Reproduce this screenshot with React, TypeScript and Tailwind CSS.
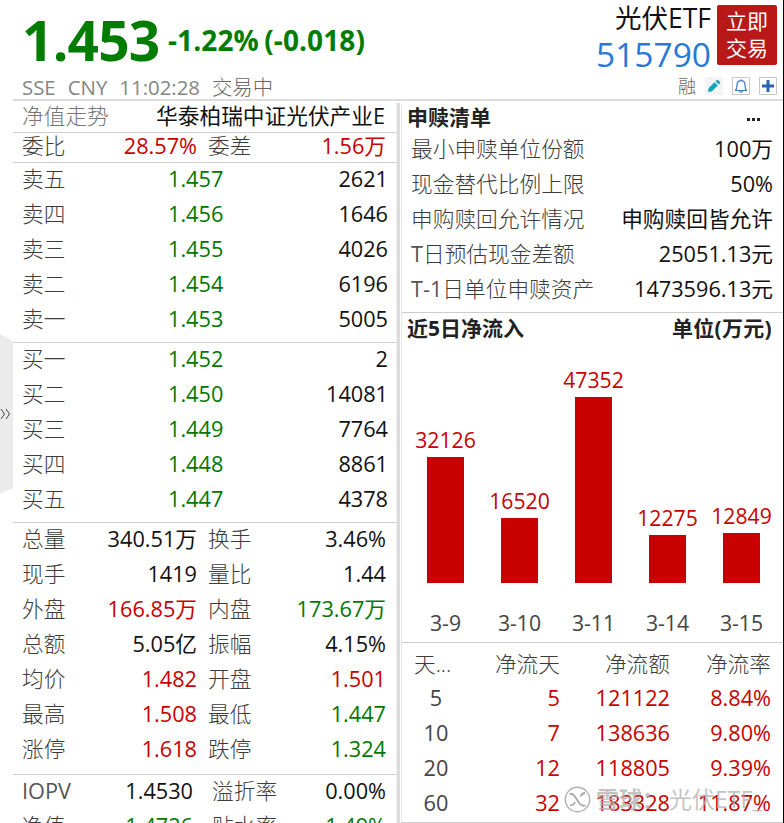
import React from 'react';
import clsx from 'clsx';

type Tone = 'up' | 'down' | 'flat';

const toneClass: Record<Tone, string> = {
  up: 'text-[#c80000]',
  down: 'text-[#007800]',
  flat: 'text-[#111111]',
};

const asks = [
  ['卖五', '1.457', '2621'],
  ['卖四', '1.456', '1646'],
  ['卖三', '1.455', '4026'],
  ['卖二', '1.454', '6196'],
  ['卖一', '1.453', '5005'],
];

const bids = [
  ['买一', '1.452', '2'],
  ['买二', '1.450', '14081'],
  ['买三', '1.449', '7764'],
  ['买四', '1.448', '8861'],
  ['买五', '1.447', '4378'],
];

const stats: [string, string, Tone, string, string, Tone][] = [
  ['总量', '340.51万', 'flat', '换手', '3.46%', 'flat'],
  ['现手', '1419', 'flat', '量比', '1.44', 'flat'],
  ['外盘', '166.85万', 'up', '内盘', '173.67万', 'down'],
  ['总额', '5.05亿', 'flat', '振幅', '4.15%', 'flat'],
  ['均价', '1.482', 'up', '开盘', '1.501', 'up'],
  ['最高', '1.508', 'up', '最低', '1.447', 'down'],
  ['涨停', '1.618', 'up', '跌停', '1.324', 'down'],
];

const navStats: [string, string, Tone, string, string, Tone][] = [
  ['IOPV', '1.4530', 'flat', '溢折率', '0.00%', 'flat'],
  ['净值', '1.4726', 'down', '贴水率', '1.49%', 'down'],
];

const redemption = [
  ['最小申赎单位份额', '100万'],
  ['现金替代比例上限', '50%'],
  ['申购赎回允许情况', '申购赎回皆允许'],
  ['T日预估现金差额', '25051.13元'],
  ['T-1日单位申赎资产', '1473596.13元'],
];

const inflow = [
  { date: '3-9', value: 32126, height: 126 },
  { date: '3-10', value: 16520, height: 65 },
  { date: '3-11', value: 47352, height: 186 },
  { date: '3-14', value: 12275, height: 48 },
  { date: '3-15', value: 12849, height: 50 },
];

const flows = [
  ['5', '5', '121122', '8.84%'],
  ['10', '7', '138636', '9.80%'],
  ['20', '12', '118805', '9.39%'],
  ['60', '32', '183328', '11.87%'],
];

// Chinese labels are light, a leading latin part keeps the normal weight
const Label = ({ text, className }: { text: string; className?: string }) => {
  const latin = text.match(/^[A-Z0-9-]+/)?.[0] ?? '';
  return (
    <span className={clsx('font-light text-[#3c3c3c]', className)}>
      {latin && <span className="font-normal text-[#555]">{latin}</span>}
      {text.slice(latin.length)}
    </span>
  );
};

const Header = () => (
  <header className="flex h-[101px] shrink-0 justify-between border-b-2 border-[#dcdcdc] pl-[9px]">
    <div>
      <div className="flex h-[76px] items-center font-bold text-[#007c00]">
        <span className="mt-[3px] w-[146px] text-[55px] leading-none tracking-[-0.8px]">1.453</span>
        <span className="mt-[3px] text-[28px] leading-none tracking-[0.1px] [word-spacing:-2px]">
          -1.22% (-0.018)
        </span>
      </div>
      <div className="flex h-[22px] items-center gap-[12px] text-[20.4px] text-[#858585]">
        <span>SSE</span>
        <span>CNY</span>
        <span>11:02:28</span>
        <span className="font-light text-[#666]">交易中</span>
      </div>
    </div>
    <div className="w-[190px] pr-[6px]">
      <div className="flex h-[70px] justify-end gap-[6px] pt-[5px]">
        <div className="text-right">
          <div className="h-[29px] text-[26.500px] leading-[26px] text-[#111]">光伏ETF</div>
          <div className="text-[33.500px] leading-[40px] text-[#2878d8]">515790</div>
        </div>
        <button className="h-[60px] w-[60px] shrink-0 rounded-[2px] bg-[#b81818] text-[21px] leading-[27px] text-white">
          立即
          <br />
          交易
        </button>
      </div>
      <div className="flex h-[32px] items-center justify-end gap-[9px]">
        <span className="text-[18px] font-light text-[#666]">融</span>
        <svg className="h-[18px] w-[18px] bg-[#f3f3f3]" viewBox="0 0 18 18">
          <path d="M3 15l.8-4L9.500 5.300l3.200 3.200L7 14.200z" fill="#0aa5bd" />
          <path d="M10.500 4.300l1-1q1-.8 1.800 0l1.400 1.400q.8.900 0 1.800l-1 1z" fill="#0aa5bd" />
        </svg>
        <svg className="h-[18px] w-[18px] bg-white" viewBox="0 0 18 18" fill="none">
          <path d="M.5.5h17v17H.5z" stroke="#c8c8c8" />
          <path
            d="M3 13.500h12M3.500 13.300q1.500-1.300 1.500-5.300c0-2.700 1.700-4.300 4-4.300s4 1.600 4 4.300q0 4 1.500 5.300M9 2.200v1.500M7.300 14q1.700 2.500 3.400 0"
            stroke="#3d78c4"
            strokeWidth="1.200"
          />
        </svg>
        <svg className="h-[18px] w-[18px] bg-white" viewBox="0 0 18 18" fill="none">
          <path d="M.5.5h17v17H.5z" stroke="#c8c8c8" />
          <path d="M9 3v12M3 9h12" stroke="#2a62b0" strokeWidth="3" />
        </svg>
      </div>
    </div>
  </header>
);

const OrderRow = ({ row }: { row: string[] }) => (
  <div className="flex h-[35px] items-center pr-[8px] pb-[3px] pl-[9px]">
    <Label text={row[0]} className="w-[146px]" />
    <span className="text-[#007800]">{row[1]}</span>
    <span className="ml-auto text-[#111]">{row[2]}</span>
  </div>
);

const StatRow = ({ row, nav }: { row: (typeof stats)[number]; nav?: boolean }) => (
  <div className="flex h-[35px] items-center pr-[10px] pb-[3px] pl-[9px]">
    <Label text={row[0]} className="w-[60px]" />
    <span className={clsx('text-right', nav ? 'w-[111px]' : 'w-[115px]', toneClass[row[2]])}>{row[1]}</span>
    <Label text={row[3]} className={nav ? 'ml-[19px]' : 'ml-[11px]'} />
    <span className={clsx('ml-auto', toneClass[row[5]])}>{row[4]}</span>
  </div>
);

const QuotePanel = () => (
  <section className="w-[383px] shrink-0 pt-[1px]">
    <div className="flex h-[31px] items-center justify-between border-b border-[#ccc] pr-[11px] pb-[2px] pl-[9px]">
      <span className="font-light text-[#777]">净值走势</span>
      <span className="text-[#111]">华泰柏瑞中证光伏产业E</span>
    </div>
    <div className="flex h-[30px] items-center border-b border-[#ccc]">
      <div className="w-full">
        <StatRow row={['委比', '28.57%', 'up', '委差', '1.56万', 'up']} />
      </div>
    </div>
    <div className="border-b border-[#ccc] pb-[4px]">
      {asks.map((row) => (
        <OrderRow key={row[0]} row={row} />
      ))}
    </div>
    <div className="border-b border-[#ccc] pb-[4px]">
      {bids.map((row) => (
        <OrderRow key={row[0]} row={row} />
      ))}
    </div>
    <div className="border-b border-[#ccc] pb-[6px]">
      {stats.map((row) => (
        <StatRow key={row[0]} row={row} />
      ))}
    </div>
    {navStats.map((row) => (
      <StatRow key={row[0]} row={row} nav />
    ))}
  </section>
);

const InflowChart = () => (
  <div className="h-[297px] border-b border-[#ccc] pl-[6px]">
    <div className="flex h-[237px] items-end">
      {inflow.map((bar) => (
        <div key={bar.date} className="flex w-[74px] flex-col items-center">
          <span className="mb-[2px] pl-[1px] text-[21.200px] leading-[30px] text-[#c80000]">{bar.value}</span>
          <div className="w-[37px] bg-[#c80000]" style={{ height: bar.height }} />
        </div>
      ))}
    </div>
    <div className="flex pt-[25px] text-[21.200px] text-[#444]">
      {inflow.map((bar) => (
        <span key={bar.date} className="w-[74px] pl-[1px] text-center leading-[30px]">
          {bar.date}
        </span>
      ))}
    </div>
  </div>
);

const FundPanel = () => (
  <section className="w-[381px] shrink-0 pt-[1px]">
    <div className="flex h-[31px] items-center justify-between pr-[23px] pl-[5px] text-[21px] font-bold text-[#222]">
      <span>申赎清单</span>
      <span className="flex gap-[2px] pt-[3px]">
        <i className="size-[3px] bg-[#222]" />
        <i className="size-[3px] bg-[#222]" />
        <i className="size-[3px] bg-[#222]" />
      </span>
    </div>
    <div className="border-b border-[#ccc] pb-[4px]">
      {redemption.map(([label, value]) => (
        <div key={label} className="flex h-[35px] items-center justify-between pr-[10px] pb-[3px] pl-[9px]">
          <Label text={label} />
          <span className="text-[#111]">{value}</span>
        </div>
      ))}
    </div>
    <div className="flex h-[33px] items-center justify-between pr-[11px] pb-[2px] pl-[5px] text-[21px] font-bold text-[#222]">
      <span>近5日净流入</span>
      <span className="tracking-[0.3px]">单位(万元)</span>
    </div>
    <InflowChart />
    <div className="border-b border-[#ccc] pt-[4px]">
      <div className="flex h-[35px] items-center pb-[2px] font-light text-[#3c3c3c]">
        <span className="w-[67px] pl-[12px]">天...</span>
        <span className="w-[91px] text-right">净流天</span>
        <span className="w-[110px] text-right">净流额</span>
        <span className="w-[101px] text-right">净流率</span>
      </div>
      {flows.map((row) => (
        <div key={row[0]} className="flex h-[35px] items-center pb-[3px] text-[#c80000]">
          <span className="w-[67px] pl-[1px] text-center text-[#444]">{row[0]}</span>
          <span className="w-[91px] text-right">{row[1]}</span>
          <span className="w-[110px] text-right">{row[2]}</span>
          <span className="w-[101px] text-right">{row[3]}</span>
        </div>
      ))}
    </div>
  </section>
);

const Watermark = () => (
  <div className="absolute top-[784px] left-[564px] flex items-center text-[23px] leading-[30px] text-[#b0b0b0]/75">
    <svg className="mr-[5px] h-[27px] w-[27px]" viewBox="0 0 27 27" fill="none">
      <circle cx="13.500" cy="13.500" r="12.200" fill="#fff" fillOpacity=".8" stroke="#b0b0b0" strokeWidth="1.400" />
      <path
        d="M5.500 8q3-1 5 2l5 7.500q2.500 3 6 2M21 7q-3 0-4.500 3.500M6 19.500q3.500 0 5-3.500"
        stroke="#a8a8a8"
        strokeWidth="1.800"
      />
    </svg>
    <span className="w-[70px] font-bold">雪球：</span>
    <span className="pl-[3px]">光伏ETF_</span>
  </div>
);

export default function App() {
  return (
    <div className="relative flex h-[823px] w-[784px] overflow-hidden bg-white font-['Open_Sans','Noto_Sans_CJK_SC',sans-serif] text-[21.7px] leading-none whitespace-nowrap">
      <div className="w-[13px] shrink-0 pt-[334px]">
        <svg className="h-[160px] w-[13px]" viewBox="0 0 13 160" fill="none">
          <path d="M0 0l13 7v147L0 160z" fill="#ebebeb" />
          <path d="M1 75l3.500 5L1 85M6 75l3.500 5L6 85" stroke="#444" />
        </svg>
      </div>
      <div className="flex w-[770px] shrink-0 flex-col">
        <Header />
        <div className="flex min-h-0 flex-1">
          <QuotePanel />
          <div className="mt-[2px] w-[6px] shrink-0 border-x border-r-[#e8e8e8] border-l-[#eee] pr-[1px]">
            <div className="h-full bg-[#dcdcdc]" />
          </div>
          <FundPanel />
        </div>
      </div>
      <div className="w-px shrink-0 bg-black" />
      <Watermark />
    </div>
  );
}
